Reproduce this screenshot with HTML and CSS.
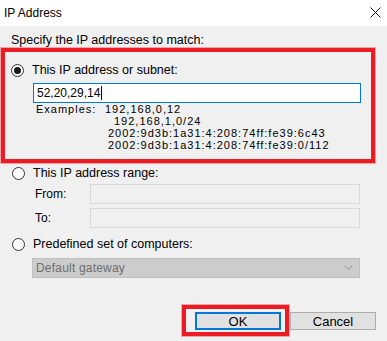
FILE: index.html
```html
<!DOCTYPE html>
<html>
    <head>
        <meta charset="UTF-8">
        <title>IP Address</title>
        <link rel="stylesheet" href="styles.css">
    </head>
    <body>
        <div class="titlebar">
            <span class="title">IP Address</span>
            <svg class="close" width="11" height="11" viewBox="0 0 11 11">
                <path d="M0.5 0.5L10.5 10.5M10.5 0.5L0.5 10.5" stroke="#111" stroke-width="1"/>
            </svg>
        </div>
        <div class="content">
            <div class="caption">Specify the IP addresses to match:</div>
            <!--选中的选项外面有红框-->
            <div class="mark group">
                <div class="option">
                    <span class="radio checked"></span>
                    <span>This IP address or subnet:</span>
                </div>
                <div class="field focused">52,20,29,14<span class="caret"></span></div>
                <div class="examples">
                    <div><span class="ex-label">Examples:</span>192,168,0,12</div>
                    <div class="ex2">192,168,1,0/24</div>
                    <div class="ex3">2002:9d3b:1a31:4:208:74ff:fe39:6c43</div>
                    <div class="ex3">2002:9d3b:1a31:4:208:74ff:fe39:0/112</div>
                </div>
            </div>
            <div class="option range">
                <span class="radio"></span>
                <span>This IP address range:</span>
            </div>
            <div class="rangerow">
                <span class="rangelabel">From:</span>
                <div class="field disabled"></div>
            </div>
            <div class="rangerow">
                <span class="rangelabel">To:</span>
                <div class="field disabled"></div>
            </div>
            <div class="option predef">
                <span class="radio"></span>
                <span>Predefined set of computers:</span>
            </div>
            <div class="select">
                <span>Default gateway</span>
                <svg width="9" height="6" viewBox="0 0 9 6">
                    <path d="M0.5 0.5L4.5 4.5L8.5 0.5" fill="none" stroke="#a8a8a8" stroke-width="1.2"/>
                </svg>
            </div>
            <div class="buttons">
                <div class="mark okmark">
                    <button class="btn default">OK</button>
                </div>
                <button class="btn">Cancel</button>
            </div>
        </div>
    </body>
</html>
```

FILE: styles.css
```css
*{
    margin: 0;
    padding: 0;
    box-sizing: border-box;
}
body{
    width: 387px;
    height: 341px;
    overflow: hidden;
    background-color: #f0f0f0;
    font-family: "Liberation Sans", Arial, sans-serif;
    font-size: 12.5px;
    color: #000;
}
.titlebar{
    height: 26px;
    background-color: #fff;
    display: flex;
    align-items: center;
    justify-content: space-between;
    padding: 0 6px 0 4px;
}
.title{
    font-size: 12px;
}
.close{
    margin-top: -1px;
}
.content{
    padding: 0 0 0 1px;
}
.caption{
    margin: 7px 0 0 10px;
    line-height: 15px;
}
.mark{
    border: 4px solid #ed1c24;
    box-shadow: 0 0 0 1px rgba(237, 28, 36, 0.35);
}
.group{
    width: 374px;
    padding: 10px 0 8px 6px;
}
.option{
    display: flex;
    align-items: center;
    height: 16px;
}
.radio{
    width: 13px;
    height: 13px;
    border: 1px solid #333;
    border-radius: 50%;
    background-color: #fff;
    margin-right: 8px;
    display: flex;
    align-items: center;
    justify-content: center;
}
.radio.checked::after{
    content: "";
    width: 7px;
    height: 7px;
    border-radius: 50%;
    background-color: #1a1a1a;
}
.field{
    height: 20px;
    border: 1px solid #d9d9d9;
    background-color: #f0f0f0;
}
.group .field{
    margin: 5px 0 0 22px;
    width: 328px;
}
.field.focused{
    border-color: #0078d7;
    background-color: #fff;
    padding-left: 3px;
    font-size: 12px;
    display: flex;
    align-items: center;
}
.caret{
    width: 1px;
    height: 14px;
    background-color: #000;
    margin-left: 1px;
}
.examples{
    margin-left: 25px;
    font-size: 11px;
    letter-spacing: 1px;
    line-height: 12px;
}
.ex-label{
    display: inline-block;
    width: 69px;
}
.ex2{
    padding-left: 78px;
}
.ex3{
    padding-left: 72px;
}
.range{
    margin: 2px 0 0 11px;
}
.rangerow{
    display: flex;
    align-items: center;
    margin: 3px 0 0 34px;
}
.rangerow + .rangerow{
    margin-top: 4px;
}
.rangelabel{
    width: 55px;
    font-size: 12px;
}
.rangerow .field{
    width: 270px;
}
.predef{
    margin: 8px 0 0 11px;
}
.select{
    width: 328px;
    height: 20px;
    margin: 6px 0 0 31px;
    background-color: #cccccc;
    border: 1px solid #bfbfbf;
    color: #6d6d6d;
    font-size: 12px;
    letter-spacing: 0.2px;
    display: flex;
    align-items: center;
    justify-content: space-between;
    padding: 0 6px 0 3px;
}
.buttons{
    display: flex;
    align-items: flex-start;
    margin: 27px 0 0 181px;
}
.okmark{
    padding: 3px 4px 2px 9px;
}
.btn{
    width: 86px;
    height: 18px;
    font-family: "Liberation Sans", Arial, sans-serif;
    font-size: 13px;
    background-color: #e1e1e1;
    border: 1px solid #adadad;
    color: #000;
}
.btn.default{
    border: 2px solid #0078d7;
}
.okmark + .btn{
    margin: 7px 0 0 1px;
}
```
